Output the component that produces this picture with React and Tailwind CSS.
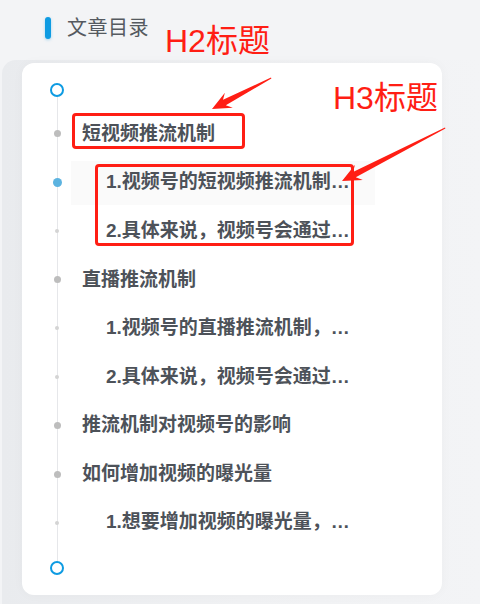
import React from "react";

const FONT = "font-['Liberation_Sans','Noto_Sans_CJK_SC',sans-serif]";

const toc = [
  { level: 2, text: "短视频推流机制" },
  { level: 3, text: "1.视频号的短视频推流机制是基于用户兴趣推荐", active: true },
  { level: 3, text: "2.具体来说，视频号会通过用户的浏览行为" },
  { level: 2, text: "直播推流机制" },
  { level: 3, text: "1.视频号的直播推流机制，与短视频类似" },
  { level: 3, text: "2.具体来说，视频号会通过直播间的互动数据" },
  { level: 2, text: "推流机制对视频号的影响" },
  { level: 2, text: "如何增加视频的曝光量" },
  { level: 3, text: "1.想要增加视频的曝光量，需要持续输出优质内容" },
];

const Dot = ({ level, active }) => {
  if (active) return <span className="w-[9px] h-[9px] rounded-full bg-[#5cb3e0]" />;
  if (level === 2) return <span className="w-[7px] h-[7px] rounded-full bg-[#bdbdbd]" />;
  return <span className="w-[4px] h-[4px] rounded-full bg-[#d4d4d4]" />;
};

const TocRow = ({ item }) => (
  <li className="h-[48.6px] flex items-center">
    <div className="w-[14px] flex justify-center relative z-10">
      <Dot level={item.level} active={item.active} />
    </div>
    <div
      className={`ml-[7px] w-[304px] h-[44px] flex items-center pr-[20px] ${
        item.active ? "bg-[#fafafa]" : ""
      } ${item.level === 2 ? "pl-[11px]" : "pl-[35px]"}`}
    >
      <span className="truncate text-[19px] font-bold text-[#4d5259]">{item.text}</span>
    </div>
  </li>
);

// red callouts drawn on top of the outline
const Callouts = () => (
  <>
    <div className="absolute left-[72px] top-[113px] w-[173px] h-[36px] border-[3px] border-[#ff1e14] rounded-[4px]" />
    <div className="absolute left-[95px] top-[164px] w-[259px] h-[82px] border-[3px] border-[#ff1e14] rounded-[4px]" />
    <span className="absolute left-[165px] top-[25px] text-[32px] leading-none text-[#ff1e14]">H2标题</span>
    <span className="absolute left-[333px] top-[82px] text-[32px] leading-none text-[#ff1e14]">H3标题</span>
    <svg className="absolute inset-0 pointer-events-none" width="480" height="604" viewBox="0 0 480 604">
      <polygon
        fill="#ff1e14"
        points="271,77.6 223,99.8 224.9,92.7 212,109 232.8,107.7 225.8,105.2 271.4,78.4"
      />
      <polygon
        fill="#ff1e14"
        points="445,127.6 353,171.9 355,164.7 342,181 362.8,179.9 355.8,177.3 445.4,128.4"
      />
    </svg>
  </>
);

export default function App() {
  return (
    <div className={`relative w-[480px] h-[604px] overflow-hidden bg-[#f3f4f6] ${FONT}`}>
      <header className="h-[56px] flex items-center pl-[45px] gap-[16px]">
        <span className="w-[6px] h-[22px] rounded-full bg-[#0e9be2] shadow-[0_1px_3px_rgba(14,155,226,0.35)]" />
        <h1 className="text-[20px] text-[#555a60] font-normal tracking-[0.5px]">文章目录</h1>
      </header>

      <div className="ml-[2px] mt-[4px] h-[548px] rounded-tl-[14px] bg-gradient-to-r from-[#e9ebee] via-[#f0f1f3] to-[#f3f4f6] pl-[20px] pt-[3px]">
        <nav className="relative w-[420px] h-[532px] bg-white rounded-[12px] pt-[20px] pl-[28px] shadow-[0_0_12px_rgba(0,0,0,0.03)]">
          <div className="absolute left-[34.5px] top-[34px] h-[464px] w-px bg-[#e6e7ea]" />
          <span className="block w-[14px] h-[14px] rounded-full border-2 border-[#0e9be2] bg-white relative z-10" />
          <ul className="mt-[12.7px]">
            {toc.map((item, i) => (
              <TocRow key={i} item={item} />
            ))}
          </ul>
          <span className="block mt-[14px] w-[14px] h-[14px] rounded-full border-2 border-[#0e9be2] bg-white relative z-10" />
        </nav>
      </div>

      <Callouts />
    </div>
  );
}
